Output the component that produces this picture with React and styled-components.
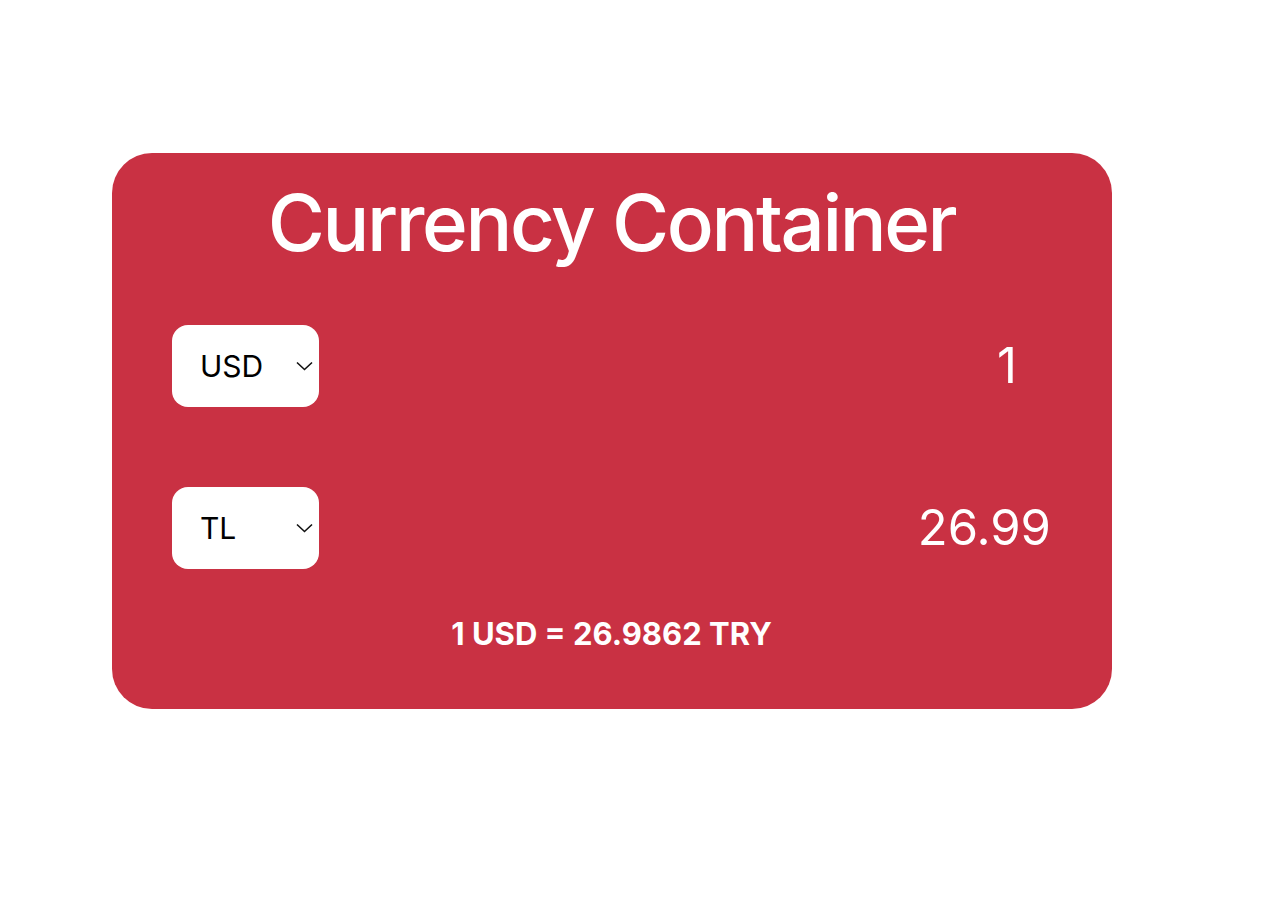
import React, { useState } from 'react';
import styled, { createGlobalStyle } from 'styled-components';

const GlobalStyle = createGlobalStyle`
  body {
    margin: 0;
    background: #ffffff;
    font-family: Inter, "Noto Sans", sans-serif;
  }
`;

const Page = styled.div`
  padding: 153px 0 0 112px;
`;

const Card = styled.div`
  width: 1000px;
  height: 556px;
  box-sizing: border-box;
  background-color: #c93143;
  border-radius: 40px;
  padding: 23px 61px 0 60px;
  display: flex;
  flex-direction: column;
  color: #ffffff;
`;

const Title = styled.h1`
  margin: 0;
  text-align: center;
  font-size: 78px;
  font-weight: 500;
  line-height: 1.2;
  letter-spacing: -2.4px;
`;

const Row = styled.div`
  display: flex;
  align-items: center;
  justify-content: space-between;
  height: 82px;
  margin-top: ${(p) => p.$top}px;
`;

const SelectWrap = styled.div`
  position: relative;
  width: 147px;
  height: 82px;
`;

const CurrencySelect = styled.select`
  appearance: none;
  -webkit-appearance: none;
  width: 100%;
  height: 100%;
  border: none;
  border-radius: 16px;
  background: #ffffff;
  color: #000000;
  font-family: Inter, sans-serif;
  font-size: 30px;
  padding: 0 30px 0 28px;
  outline: none;
`;

const Chevron = styled.svg`
  position: absolute;
  right: 6px;
  top: 36px;
  width: 17px;
  height: 10px;
  pointer-events: none;
`;

const Amount = styled.div`
  font-size: 49px;
  font-weight: 400;
  text-align: right;
  padding-right: ${(p) => p.$pad || 0}px;
`;

const Rate = styled.div`
  margin-top: 46px;
  text-align: center;
  font-size: 31px;
  font-weight: 700;
`;

const Select = ({ value, onChange, options }) => (
  <SelectWrap>
    <CurrencySelect value={value} onChange={(e) => onChange(e.target.value)}>
      {options.map((o) => (
        <option key={o}>{o}</option>
      ))}
    </CurrencySelect>
    <Chevron viewBox="0 0 17 10" fill="none">
      <path d="M1 1.5 L8.5 8.5 L16 1.5" stroke="#111" strokeWidth="1.6" />
    </Chevron>
  </SelectWrap>
);

const App = () => {
  const [from, setFrom] = useState('USD');
  const [to, setTo] = useState('TL');

  return (
    <>
      <GlobalStyle />
      <Page>
        <Card>
          <Title>Currency Container</Title>
          <Row $top={55}>
            <Select value={from} onChange={setFrom} options={['USD', 'EUR', 'TL']} />
            <Amount $pad={34}>1</Amount>
          </Row>
          <Row $top={80}>
            <Select value={to} onChange={setTo} options={['TL', 'USD', 'EUR']} />
            <Amount>26.99</Amount>
          </Row>
          <Rate>1 USD = 26.9862 TRY</Rate>
        </Card>
      </Page>
    </>
  );
};

export default App;
